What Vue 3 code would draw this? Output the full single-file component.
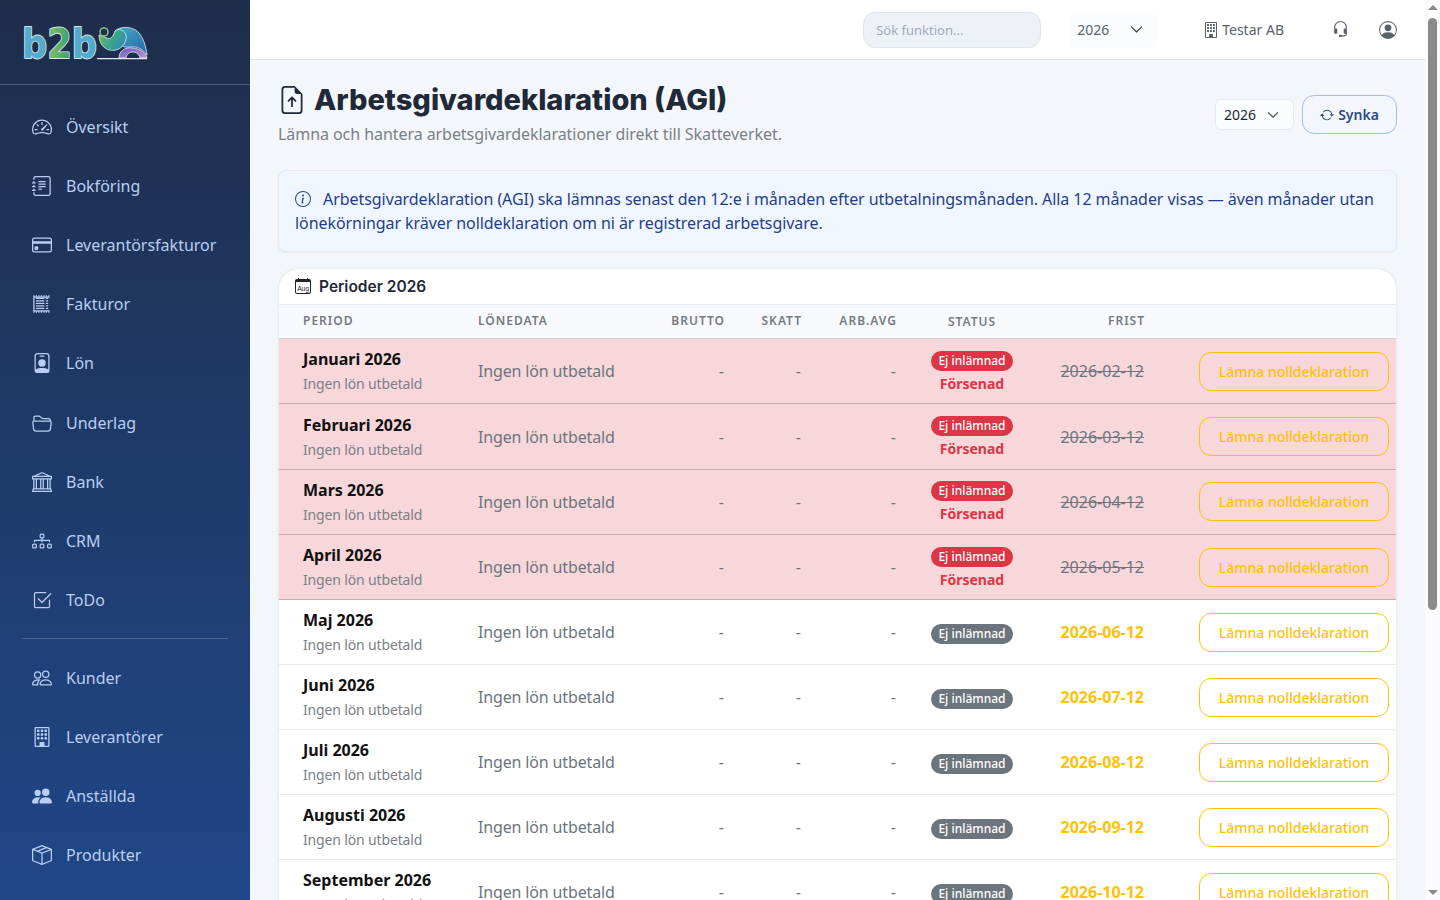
<template>
  <div class="layout">
    <aside class="sidebar">
      <div class="brand">
        <svg class="logo" viewBox="0 -6 130 52" width="130" height="52">
          <defs>
            <linearGradient id="letters" x1="0" y1="0" x2="1" y2="0">
              <stop offset="0" stop-color="#52acce" />
              <stop offset="0.34" stop-color="#52acce" />
              <stop offset="0.42" stop-color="#76ba5e" />
              <stop offset="0.62" stop-color="#3aa07a" />
              <stop offset="0.68" stop-color="#52acce" />
              <stop offset="1" stop-color="#52acce" />
            </linearGradient>
            <linearGradient id="trunk" x1="0" y1="0" x2="1" y2="0.5">
              <stop offset="0" stop-color="#7dbb5a" />
              <stop offset="0.6" stop-color="#3aa58c" />
              <stop offset="1" stop-color="#2f8fb0" />
            </linearGradient>
            <linearGradient id="dome" x1="0" y1="0" x2="1" y2="1">
              <stop offset="0" stop-color="#3fb0c8" />
              <stop offset="1" stop-color="#2d5fa6" />
            </linearGradient>
            <linearGradient id="legs" x1="0" y1="0" x2="1" y2="1">
              <stop offset="0" stop-color="#6a58c0" />
              <stop offset="1" stop-color="#c094d4" />
            </linearGradient>
          </defs>
          <text class="logo-text" x="2" y="35" textLength="75" lengthAdjust="spacingAndGlyphs" fill="url(#letters)">b2b</text>
          <path d="M77 35.6h50" stroke="#e3e8ec" stroke-width="1.4" />
          <path d="M99 35c0-8 7-11 14-10 8 1 13 5 14 10h-7c-1-4-4-6-7-6-4 0-6 2-7 6z" fill="url(#legs)" stroke="#e3e8ec" stroke-width="0.8" />
          <path d="M95 8c5-5 17-5 23 1 5 5 8 14 9 23-4-6-10-9-17-8-6 1-10-1-12-6z" fill="url(#dome)" stroke="#e3e8ec" stroke-width="0.8" />
          <path d="M79 12c0 11 8 17 17 15 8-2 11-10 10-15-2-5-7-7-11-4-2 6-5 9-8 7z" fill="url(#trunk)" stroke="#e3e8ec" stroke-width="0.8" />
          <circle cx="84" cy="9" r="4" fill="#1e2e4b" stroke="#7fc08a" stroke-width="1.6" />
        </svg>
      </div>
      <nav class="nav">
        <template v-for="item in navItems" :key="item.label">
          <div v-if="item.divider" class="nav-divider"></div>
          <a class="nav-item" href="#">
            <svg class="nav-icon" viewBox="0 0 16 16" width="20" height="20" fill="currentColor">
              <path v-for="d in item.icon" :key="d" :d="d" fill-rule="evenodd" />
            </svg>
            <span>{{ item.label }}</span>
          </a>
        </template>
      </nav>
    </aside>

    <div class="page">
      <header class="topbar">
        <input class="search" type="text" placeholder="Sök funktion..." />
        <div class="top-year">
          <span>2026</span>
          <svg viewBox="0 0 16 16" width="13" height="13" fill="#343a40" stroke="#343a40" stroke-width="0.6"><path :d="icons.chevron" /></svg>
        </div>
        <div class="company">
          <svg viewBox="0 0 16 16" width="16" height="16" fill="currentColor"><path v-for="d in icons.building" :key="d" :d="d" /></svg>
          <span>Testar AB</span>
        </div>
        <svg class="top-icon headset" viewBox="0 0 16 16" width="17" height="17" fill="currentColor"><path :d="icons.headset" /></svg>
        <svg class="top-icon" viewBox="0 0 16 16" width="18" height="18" fill="currentColor"><path v-for="d in icons.person" :key="d" :d="d" fill-rule="evenodd" /></svg>
      </header>

      <main class="content">
        <div class="page-head">
          <div>
            <h1>
              <svg viewBox="0 0 16 16" width="28" height="28" fill="currentColor"><path v-for="d in icons.fileUp" :key="d" :d="d" /></svg>
              Arbetsgivardeklaration (AGI)
            </h1>
            <p class="subtitle">Lämna och hantera arbetsgivardeklarationer direkt till Skatteverket.</p>
          </div>
          <div class="head-actions">
            <div class="year-select">
              <span>2026</span>
              <svg viewBox="0 0 16 16" width="12" height="12" fill="#343a40" stroke="#343a40" stroke-width="0.6"><path :d="icons.chevron" /></svg>
            </div>
            <button class="sync-btn">
              <svg viewBox="0 0 16 16" width="14" height="14" fill="currentColor"><path v-for="d in icons.sync" :key="d" :d="d" fill-rule="evenodd" /></svg>
              Synka
            </button>
          </div>
        </div>

        <div class="info-box">
          <svg viewBox="0 0 16 16" width="16" height="16" fill="currentColor"><path v-for="d in icons.info" :key="d" :d="d" /></svg>
          Arbetsgivardeklaration (AGI) ska lämnas senast den 12:e i månaden efter utbetalningsmånaden. Alla 12 månader visas — även månader utan lönekörningar kräver nolldeklaration om ni är registrerad arbetsgivare.
        </div>

        <section class="card">
          <div class="card-head">
            <svg viewBox="0 0 16 16" width="16" height="16" fill="currentColor">
              <path :d="icons.calendar" fill-rule="evenodd" />
              <text x="8" y="12.6" text-anchor="middle" font-size="6.6" font-family="Liberation Sans, sans-serif">Aug</text>
            </svg>
            <h2>Perioder 2026</h2>
          </div>
          <table class="agi-table">
            <colgroup>
              <col class="col-period" />
              <col class="col-pay" />
              <col class="col-gross" />
              <col class="col-tax" />
              <col class="col-fee" />
              <col class="col-status" />
              <col class="col-due" />
              <col />
            </colgroup>
            <thead>
              <tr>
                <th class="first">Period</th>
                <th>Lönedata</th>
                <th class="num">Brutto</th>
                <th class="num">Skatt</th>
                <th class="num">Arb.avg</th>
                <th class="center">Status</th>
                <th class="num">Frist</th>
                <th></th>
              </tr>
            </thead>
            <tbody>
              <tr v-for="row in rows" :key="row.name" :class="{ late: row.late }">
                <td class="first">
                  <div class="period-name">{{ row.name }}</div>
                  <div class="period-sub">Ingen lön utbetald</div>
                </td>
                <td class="muted pay">Ingen lön utbetald</td>
                <td class="num muted">-</td>
                <td class="num muted">-</td>
                <td class="num muted">-</td>
                <td class="center">
                  <span class="badge">Ej inlämnad</span>
                  <div v-if="row.late" class="late-text">Försenad</div>
                </td>
                <td class="num"><span class="due">{{ row.due }}</span></td>
                <td class="action"><button class="zero-btn">Lämna nolldeklaration</button></td>
              </tr>
            </tbody>
          </table>
        </section>
      </main>
    </div>

    <!-- the window's scrollbar as in the reference -->
    <div class="scrollbar" aria-hidden="true">
      <span class="arrow up"></span>
      <div class="scroll-track"><div class="scroll-thumb"></div></div>
      <span class="arrow down"></span>
    </div>
  </div>
</template>

<script setup>
// bootstrap-icons paths
const icons = {
  chevron: 'M1.646 4.646a.5.5 0 0 1 .708 0L8 10.293l5.646-5.647a.5.5 0 0 1 .708.708l-6 6a.5.5 0 0 1-.708 0l-6-6a.5.5 0 0 1 0-.708',
  headset: 'M8 1a5 5 0 0 0-5 5v1h1a1 1 0 0 1 1 1v3a1 1 0 0 1-1 1H3a1 1 0 0 1-1-1V6a6 6 0 1 1 12 0v6a2.5 2.5 0 0 1-2.5 2.5H9.366a1 1 0 0 1-.866.5h-1a1 1 0 1 1 0-2h1a1 1 0 0 1 .866.5H11.5A1.5 1.5 0 0 0 13 12h-1a1 1 0 0 1-1-1V8a1 1 0 0 1 1-1h1V6a5 5 0 0 0-5-5',
  person: [
    'M11 6a3 3 0 1 1-6 0 3 3 0 0 1 6 0',
    'M0 8a8 8 0 1 1 16 0A8 8 0 0 1 0 8m8-7a7 7 0 0 0-5.468 11.37C3.242 11.226 4.805 10 8 10s4.757 1.225 5.468 2.37A7 7 0 0 0 8 1',
  ],
  building: [
    'M4 2.5a.5.5 0 0 1 .5-.5h1a.5.5 0 0 1 .5.5v1a.5.5 0 0 1-.5.5h-1a.5.5 0 0 1-.5-.5zm3 0a.5.5 0 0 1 .5-.5h1a.5.5 0 0 1 .5.5v1a.5.5 0 0 1-.5.5h-1a.5.5 0 0 1-.5-.5zm3.5-.5a.5.5 0 0 0-.5.5v1a.5.5 0 0 0 .5.5h1a.5.5 0 0 0 .5-.5v-1a.5.5 0 0 0-.5-.5zM4 5.5a.5.5 0 0 1 .5-.5h1a.5.5 0 0 1 .5.5v1a.5.5 0 0 1-.5.5h-1a.5.5 0 0 1-.5-.5zM7.5 5a.5.5 0 0 0-.5.5v1a.5.5 0 0 0 .5.5h1a.5.5 0 0 0 .5-.5v-1a.5.5 0 0 0-.5-.5zm2.5.5a.5.5 0 0 1 .5-.5h1a.5.5 0 0 1 .5.5v1a.5.5 0 0 1-.5.5h-1a.5.5 0 0 1-.5-.5zM4.5 8a.5.5 0 0 0-.5.5v1a.5.5 0 0 0 .5.5h1a.5.5 0 0 0 .5-.5v-1a.5.5 0 0 0-.5-.5zm2.5.5a.5.5 0 0 1 .5-.5h1a.5.5 0 0 1 .5.5v1a.5.5 0 0 1-.5.5h-1a.5.5 0 0 1-.5-.5zm3.5-.5a.5.5 0 0 0-.5.5v1a.5.5 0 0 0 .5.5h1a.5.5 0 0 0 .5-.5v-1a.5.5 0 0 0-.5-.5z',
    'M2 1a1 1 0 0 1 1-1h10a1 1 0 0 1 1 1v14a1 1 0 0 1-1 1H3a1 1 0 0 1-1-1zm11 0H3v14h3v-2.5a.5.5 0 0 1 .5-.5h3a.5.5 0 0 1 .5.5V15h3z',
  ],
  fileUp: [
    'M8.5 11.5a.5.5 0 0 1-1 0V7.707L6.354 8.854a.5.5 0 1 1-.708-.708l2-2a.5.5 0 0 1 .708 0l2 2a.5.5 0 0 1-.708.708L8.5 7.707z',
    'M14 14V4.5L9.5 0H4a2 2 0 0 0-2 2v12a2 2 0 0 0 2 2h8a2 2 0 0 0 2-2M9.5 3A1.5 1.5 0 0 0 11 4.5h2V14a1 1 0 0 1-1 1H4a1 1 0 0 1-1-1V2a1 1 0 0 1 1-1h5.5z',
  ],
  sync: [
    'M11.534 7h3.932a.25.25 0 0 1 .192.41l-1.966 2.36a.25.25 0 0 1-.384 0l-1.966-2.36a.25.25 0 0 1 .192-.41m-11 2h3.932a.25.25 0 0 0 .192-.41L2.692 6.23a.25.25 0 0 0-.384 0L.342 8.59A.25.25 0 0 0 .534 9',
    'M8 3c-1.552 0-2.94.707-3.857 1.818a.5.5 0 1 1-.771-.636A6.002 6.002 0 0 1 13.917 7H12.9A5 5 0 0 0 8 3M3.1 9a5.002 5.002 0 0 0 8.757 2.182.5.5 0 1 1 .771.636A6.002 6.002 0 0 1 2.083 9z',
  ],
  info: [
    'M8 15A7 7 0 1 1 8 1a7 7 0 0 1 0 14m0 1A8 8 0 1 0 8 0a8 8 0 0 0 0 16',
    'm8.93 6.588-2.29.287-.082.38.45.083c.294.07.352.176.288.469l-.738 3.468c-.194.897.105 1.319.808 1.319.545 0 1.178-.252 1.465-.598l.088-.416c-.2.176-.492.246-.686.246-.275 0-.375-.193-.304-.533zM9 4.5a1 1 0 1 1-2 0 1 1 0 0 1 2 0',
  ],
  calendar: 'M3.5 0a.5.5 0 0 1 .5.5V1h8V.5a.5.5 0 0 1 1 0V1h1a2 2 0 0 1 2 2v11a2 2 0 0 1-2 2H2a2 2 0 0 1-2-2V3a2 2 0 0 1 2-2h1V.5a.5.5 0 0 1 .5-.5M1 4v10a1 1 0 0 0 1 1h12a1 1 0 0 0 1-1V4z',
}

const navItems = [
  { label: 'Översikt', icon: [
    'M8 4a.5.5 0 0 1 .5.5V6a.5.5 0 0 1-1 0V4.5A.5.5 0 0 1 8 4M3.732 5.732a.5.5 0 0 1 .707 0l.915.914a.5.5 0 1 1-.708.708l-.914-.915a.5.5 0 0 1 0-.707M2 10a.5.5 0 0 1 .5-.5h1.586a.5.5 0 0 1 0 1H2.5A.5.5 0 0 1 2 10m9.5 0a.5.5 0 0 1 .5-.5h1.5a.5.5 0 0 1 0 1H12a.5.5 0 0 1-.5-.5m.754-4.246a.39.39 0 0 0-.527-.02L7.547 9.31a.91.91 0 1 0 1.302 1.258l3.434-4.297a.39.39 0 0 0-.029-.518z',
    'M0 10a8 8 0 1 1 15.547 2.661c-.442 1.253-1.845 1.602-2.932 1.25C11.309 13.488 9.475 13 8 13c-1.474 0-3.31.488-4.615.911-1.087.352-2.49.003-2.932-1.25A8 8 0 0 1 0 10m8-7a7 7 0 0 0-6.603 9.329c.203.575.923.876 1.68.63C4.397 12.533 6.358 12 8 12s3.604.532 4.923.96c.757.245 1.477-.056 1.68-.631A7 7 0 0 0 8 3',
  ] },
  { label: 'Bokföring', icon: [
    'M5 10.5a.5.5 0 0 1 .5-.5h2a.5.5 0 0 1 0 1h-2a.5.5 0 0 1-.5-.5m0-2a.5.5 0 0 1 .5-.5h5a.5.5 0 0 1 0 1h-5a.5.5 0 0 1-.5-.5m0-2a.5.5 0 0 1 .5-.5h5a.5.5 0 0 1 0 1h-5a.5.5 0 0 1-.5-.5m0-2a.5.5 0 0 1 .5-.5h5a.5.5 0 0 1 0 1h-5a.5.5 0 0 1-.5-.5',
    'M3 0h10a2 2 0 0 1 2 2v12a2 2 0 0 1-2 2H3a2 2 0 0 1-2-2v-1h1v1a1 1 0 0 0 1 1h10a1 1 0 0 0 1-1V2a1 1 0 0 0-1-1H3a1 1 0 0 0-1 1v1H1V2a2 2 0 0 1 2-2',
    'M1 5v-.5a.5.5 0 0 1 1 0V5h.5a.5.5 0 0 1 0 1h-2a.5.5 0 0 1 0-1zm0 3v-.5a.5.5 0 0 1 1 0V8h.5a.5.5 0 0 1 0 1h-2a.5.5 0 0 1 0-1zm0 3v-.5a.5.5 0 0 1 1 0v.5h.5a.5.5 0 0 1 0 1h-2a.5.5 0 0 1 0-1z',
  ] },
  { label: 'Leverantörsfakturor', icon: [
    'M0 4a2 2 0 0 1 2-2h12a2 2 0 0 1 2 2v8a2 2 0 0 1-2 2H2a2 2 0 0 1-2-2zm2-1a1 1 0 0 0-1 1v1h14V4a1 1 0 0 0-1-1zm13 4H1v5a1 1 0 0 0 1 1h12a1 1 0 0 0 1-1z',
    'M2 10a1 1 0 0 1 1-1h1a1 1 0 0 1 1 1v1a1 1 0 0 1-1 1H3a1 1 0 0 1-1-1z',
  ] },
  { label: 'Fakturor', icon: [
    'M3 3.5a.5.5 0 0 1 .5-.5h6a.5.5 0 0 1 0 1h-6a.5.5 0 0 1-.5-.5m0 2a.5.5 0 0 1 .5-.5h6a.5.5 0 0 1 0 1h-6a.5.5 0 0 1-.5-.5m0 2a.5.5 0 0 1 .5-.5h6a.5.5 0 0 1 0 1h-6a.5.5 0 0 1-.5-.5m0 2a.5.5 0 0 1 .5-.5h6a.5.5 0 0 1 0 1h-6a.5.5 0 0 1-.5-.5m0 2a.5.5 0 0 1 .5-.5h6a.5.5 0 0 1 0 1h-6a.5.5 0 0 1-.5-.5M11.5 3a.5.5 0 0 0 0 1h1a.5.5 0 0 0 0-1zm0 2a.5.5 0 0 0 0 1h1a.5.5 0 0 0 0-1zm0 2a.5.5 0 0 0 0 1h1a.5.5 0 0 0 0-1zm0 2a.5.5 0 0 0 0 1h1a.5.5 0 0 0 0-1zm0 2a.5.5 0 0 0 0 1h1a.5.5 0 0 0 0-1z',
    'M1 1h1v1h1V1h1v1h1V1h1v1h1V1h1v1h1V1h1v1h1V1h1v1h1V1h1v14h-1v-1h-1v1h-1v-1h-1v1H9v-1H8v1H7v-1H6v1H5v-1H4v1H3v-1H2v1H1zm1 2v10h12V3z',
  ] },
  { label: 'Lön', icon: [
    'M6.5 2a.5.5 0 0 0 0 1h3a.5.5 0 0 0 0-1zM11 8a3 3 0 1 1-6 0 3 3 0 0 1 6 0',
    'M4.5 0A2.5 2.5 0 0 0 2 2.5V14a2 2 0 0 0 2 2h8a2 2 0 0 0 2-2V2.5A2.5 2.5 0 0 0 11.5 0zM3 2.5A1.5 1.5 0 0 1 4.5 1h7A1.5 1.5 0 0 1 13 2.5v10.795a4.2 4.2 0 0 0-.776-.492C11.392 12.387 10.063 12 8 12s-3.392.387-4.224.803a4.2 4.2 0 0 0-.776.492z',
  ] },
  { label: 'Underlag', icon: [
    'M1 3.5A1.5 1.5 0 0 1 2.5 2h2.764c.958 0 1.76.56 2.311 1.184C7.985 3.648 8.48 4 9 4h4.5A1.5 1.5 0 0 1 15 5.5v.64c.57.265.94.876.856 1.546l-.64 5.124A2.5 2.5 0 0 1 12.733 15H3.266a2.5 2.5 0 0 1-2.481-2.19l-.64-5.124A1.5 1.5 0 0 1 1 6.14zM2 6h12v-.5a.5.5 0 0 0-.5-.5H9c-.964 0-1.71-.629-2.174-1.154C6.374 3.334 5.82 3 5.264 3H2.5a.5.5 0 0 0-.5.5zm-.367 1a.5.5 0 0 0-.496.562l.64 5.124A1.5 1.5 0 0 0 3.266 14h9.468a1.5 1.5 0 0 0 1.489-1.314l.64-5.124A.5.5 0 0 0 14.367 7z',
  ] },
  { label: 'Bank', icon: [
    'm8 0 6.61 3h.89a.5.5 0 0 1 .5.5v2a.5.5 0 0 1-.5.5H15v7a.5.5 0 0 1 .485.38l.5 2a.498.498 0 0 1-.485.62H.5a.498.498 0 0 1-.485-.62l.5-2A.5.5 0 0 1 1 13V6H.5a.5.5 0 0 1-.5-.5v-2A.5.5 0 0 1 .5 3h.89zM3.777 3h8.447L8 1zM2 6v7h1V6zm2 0v7h2.5V6zm3.5 0v7h1V6zm2 0v7H12V6zM13 6v7h1V6zm2-1V4H1v1zm-.39 9H1.39l-.25 1h13.72z',
  ] },
  { label: 'CRM', icon: [
    'M6 3.5A1.5 1.5 0 0 1 7.5 2h1A1.5 1.5 0 0 1 10 3.5v1A1.5 1.5 0 0 1 8.5 6v1H14a.5.5 0 0 1 .5.5v1a.5.5 0 0 1-1 0V8h-5v.5a.5.5 0 0 1-1 0V8h-5v.5a.5.5 0 0 1-1 0v-1A.5.5 0 0 1 2 7h5.5V6A1.5 1.5 0 0 1 6 4.5zM8.5 5a.5.5 0 0 0 .5-.5v-1a.5.5 0 0 0-.5-.5h-1a.5.5 0 0 0-.5.5v1a.5.5 0 0 0 .5.5zM0 11.5A1.5 1.5 0 0 1 1.5 10h1A1.5 1.5 0 0 1 4 11.5v1A1.5 1.5 0 0 1 2.5 14h-1A1.5 1.5 0 0 1 0 12.5zm1.5-.5a.5.5 0 0 0-.5.5v1a.5.5 0 0 0 .5.5h1a.5.5 0 0 0 .5-.5v-1a.5.5 0 0 0-.5-.5zm4.5.5A1.5 1.5 0 0 1 7.5 10h1a1.5 1.5 0 0 1 1.5 1.5v1A1.5 1.5 0 0 1 8.5 14h-1A1.5 1.5 0 0 1 6 12.5zm1.5-.5a.5.5 0 0 0-.5.5v1a.5.5 0 0 0 .5.5h1a.5.5 0 0 0 .5-.5v-1a.5.5 0 0 0-.5-.5zm4.5.5a1.5 1.5 0 0 1 1.5-1.5h1a1.5 1.5 0 0 1 1.5 1.5v1a1.5 1.5 0 0 1-1.5 1.5h-1a1.5 1.5 0 0 1-1.5-1.5zm1.5-.5a.5.5 0 0 0-.5.5v1a.5.5 0 0 0 .5.5h1a.5.5 0 0 0 .5-.5v-1a.5.5 0 0 0-.5-.5z',
  ] },
  { label: 'ToDo', icon: [
    'M3 14.5A1.5 1.5 0 0 1 1.5 13V3A1.5 1.5 0 0 1 3 1.5h8a.5.5 0 0 1 0 1H3a.5.5 0 0 0-.5.5v10a.5.5 0 0 0 .5.5h10a.5.5 0 0 0 .5-.5V8a.5.5 0 0 1 1 0v5a1.5 1.5 0 0 1-1.5 1.5z',
    'm8.354 10.354 7-7a.5.5 0 0 0-.708-.708L8 9.293 5.354 6.646a.5.5 0 1 0-.708.708l3 3a.5.5 0 0 0 .708 0',
  ] },
  { label: 'Kunder', divider: true, icon: [
    'M15 14s1 0 1-1-1-4-5-4-5 3-5 4 1 1 1 1zm-7.978-1L7 12.996c.001-.264.167-1.03.76-1.72C8.312 10.629 9.282 10 11 10c1.717 0 2.687.63 3.24 1.276.593.69.758 1.457.76 1.72l-.008.002-.014.002zM11 7a2 2 0 1 0 0-4 2 2 0 0 0 0 4m3-2a3 3 0 1 1-6 0 3 3 0 0 1 6 0M6.936 9.28a6 6 0 0 0-1.23-.247A7 7 0 0 0 5 9c-4 0-5 3-5 4q0 1 1 1h4.216A2.24 2.24 0 0 1 5 13c0-1.01.377-2.042 1.09-2.904.243-.294.526-.569.846-.816M4.92 10A5.5 5.5 0 0 0 4 13H1c0-.26.164-1.03.76-1.724.545-.636 1.492-1.256 3.16-1.275ZM1.5 5.5a3 3 0 1 1 6 0 3 3 0 0 1-6 0m3-2a2 2 0 1 0 0 4 2 2 0 0 0 0-4',
  ] },
  { label: 'Leverantörer', icon: icons.building },
  { label: 'Anställda', icon: [
    'M7 14s-1 0-1-1 1-4 5-4 5 3 5 4-1 1-1 1zm4-6a3 3 0 1 0 0-6 3 3 0 0 0 0 6m-5.784 6A2.24 2.24 0 0 1 5 13c0-1.355.68-2.75 1.936-3.72A6.3 6.3 0 0 0 5 9c-4 0-5 3-5 4s1 1 1 1zM4.5 8a2.5 2.5 0 1 0 0-5 2.5 2.5 0 0 0 0 5',
  ] },
  { label: 'Produkter', icon: [
    'M8.186 1.113a.5.5 0 0 0-.372 0L1.846 3.5l2.404.961L10.404 2zm3.564 1.426L5.596 5 8 5.961 14.154 3.5zm3.25 1.7-6.5 2.6v7.922l6.5-2.6V4.24zM7.5 14.762V6.838L1 4.239v7.925zM7.443.184a1.5 1.5 0 0 1 1.114 0l7.129 2.852A.5.5 0 0 1 16 3.5v8.662a1 1 0 0 1-.629.928l-7.185 2.874a.5.5 0 0 1-.372 0L.63 13.09a1 1 0 0 1-.63-.928V3.5a.5.5 0 0 1 .314-.464z',
  ] },
]

const months = ['Januari', 'Februari', 'Mars', 'April', 'Maj', 'Juni', 'Juli', 'Augusti', 'September', 'Oktober', 'November', 'December']

const rows = months.map((m, i) => {
  const dueMonth = i === 11 ? '2027-01' : '2026-' + String(i + 2).padStart(2, '0')
  return { name: m + ' 2026', due: dueMonth + '-12', late: i < 4 }
})
</script>

<style>
html, body { margin: 0; background: #f3f6fb; }
</style>

<style scoped>
.layout {
  display: flex;
  align-items: flex-start;
  font-family: "Noto Sans", sans-serif;
  font-size: 16px;
  color: #212529;
}

/* sidebar */
.sidebar {
  position: sticky;
  top: 0;
  width: 250px;
  height: 100vh;
  flex-shrink: 0;
  overflow: hidden;
  background: linear-gradient(180deg, #1e2d4a, #204788);
}
.brand {
  height: 84px;
  box-sizing: content-box;
  border-bottom: 1px solid rgba(255, 255, 255, 0.2);
  padding-left: 20px;
  display: flex;
  align-items: center;
}
.logo { margin-top: 1px; }
.logo-text {
  font-family: "DejaVu Sans", sans-serif;
  font-weight: 700;
  font-size: 40px;
  stroke: #dfe6ea;
  stroke-width: 1.8px;
  stroke-linejoin: round;
  paint-order: stroke fill;
}
.nav { padding-top: 12.5px; }
.nav-item {
  height: 59.1px;
  display: flex;
  align-items: center;
  gap: 14px;
  padding-left: 32px;
  color: #b9cef2;
  text-decoration: none;
}
.nav-icon { flex-shrink: 0; }
.nav-divider {
  height: 1px;
  margin: 8.6px 22px 9.4px;
  background: rgba(255, 255, 255, 0.2);
}

/* top bar */
.page {
  flex: 1;
  min-width: 0;
  margin-right: 15px;
}
.topbar {
  height: 59px;
  background: #fff;
  border-bottom: 1px solid #dfe3ea;
  display: flex;
  align-items: center;
  padding-right: 28px;
  justify-content: flex-end;
  color: #5a626b;
}
.search {
  width: 178px;
  height: 36px;
  box-sizing: border-box;
  padding: 0 12px;
  background: #eef1f8;
  border: 1px solid #e1e5ed;
  border-radius: 12px;
  font: 13px "Noto Sans", sans-serif;
  outline: none;
}
.search::placeholder { color: #a3abbb; }
.top-year {
  width: 88px;
  height: 36px;
  box-sizing: border-box;
  margin-left: 28px;
  padding: 0 14px 0 8px;
  background: #fbfcfe;
  border-radius: 8px;
  display: flex;
  align-items: center;
  justify-content: space-between;
  font-size: 14px;
}
.company {
  display: flex;
  align-items: center;
  gap: 3px;
  margin-left: 46px;
  font-size: 14px;
}
.top-icon { margin-left: 30px; }
.headset { margin-left: 48px; }

/* page content */
.content { padding: 25px 28px 200px; }
.page-head {
  display: flex;
  justify-content: space-between;
  align-items: center;
}
h1 {
  margin: 0;
  display: flex;
  align-items: center;
  gap: 8px;
  font-family: Inter, sans-serif;
  font-size: 29px;
  line-height: 30px;
  font-weight: 800;
  color: #1f2937;
}
.subtitle {
  margin: 7px 0 0;
  color: #7a8088;
  line-height: 24px;
  letter-spacing: -0.06px;
}
.head-actions {
  display: flex;
  align-items: center;
  gap: 8px;
  padding-bottom: 2px;
}
.year-select {
  width: 79px;
  height: 31px;
  box-sizing: border-box;
  padding: 0 14px 0 8px;
  background: #fbfcfe;
  border: 1px solid #e6e9ef;
  border-radius: 6px;
  display: flex;
  align-items: center;
  justify-content: space-between;
  font-size: 14px;
}
.sync-btn {
  width: 95px;
  height: 39px;
  display: flex;
  align-items: center;
  justify-content: center;
  gap: 4px;
  background: transparent;
  border: 1px solid #a4bcf0;
  border-radius: 12px;
  color: #2a4a8c;
  font: 600 14px "Noto Sans", sans-serif;
}
.info-box {
  margin-top: 24px;
  padding: 16px;
  background: #f0f6ff;
  border: 1px solid #e5e9f0;
  border-radius: 8px;
  box-shadow: 0 1px 3px rgba(0, 0, 0, 0.05);
  color: #1f4088;
  line-height: 24px;
  letter-spacing: -0.07px;
}
.info-box svg {
  vertical-align: -2px;
  margin-right: 8px;
  color: #2a4a8c;
}
.card {
  margin: 17px 1px 0;
  background: #fff;
  border-radius: 20px;
  overflow: hidden;
  box-shadow: 0 0 3px rgba(40, 60, 100, 0.12);
}
.card-head {
  height: 34.7px;
  display: flex;
  align-items: center;
  gap: 8px;
  padding-left: 16px;
  border-bottom: 1px solid #e6e9f0;
}
h2 {
  margin: 0;
  font-family: Inter, sans-serif;
  font-size: 15.5px;
  font-weight: 600;
  color: #1f2937;
}

/* table */
.agi-table {
  width: 100%;
  table-layout: fixed;
  border-collapse: collapse;
}
.col-period { width: 183px; }
.col-pay { width: 178px; }
.col-gross { width: 100px; }
.col-tax { width: 77px; }
.col-fee { width: 95px; }
.col-status { width: 120px; }
.col-due { width: 128px; }
th {
  height: 34px;
  box-sizing: border-box;
  padding: 0 16px 1px;
  background: #f8f9fc;
  color: #747b84;
  font-size: 12px;
  font-weight: 600;
  letter-spacing: 1px;
  text-transform: uppercase;
  text-align: left;
  border-bottom: 1px solid #cfd3da;
}
th.num { padding-right: 15px; }
td {
  height: 65px;
  box-sizing: border-box;
  padding: 0 16px;
  border-bottom: 1px solid #e9ebf0;
}
tr.late td { height: 65.25px; }
.first { padding-left: 24px; padding-right: 0; }
.num { text-align: right; }
th.center, .center { text-align: center; padding: 0; }
.muted { color: #6c757d; }
.pay { letter-spacing: -0.15px; }
tr.late td {
  background: #f8d7da;
  border-bottom-color: #c9adb2;
}
.period-name {
  font-weight: 700;
  line-height: 24px;
  color: #111;
  margin-top: -2px;
}
.period-sub {
  margin-top: 4px;
  font-size: 14px;
  line-height: 18px;
  color: #7a8088;
  letter-spacing: -0.15px;
}
.badge {
  display: inline-block;
  padding: 0 7px;
  height: 20px;
  line-height: 20px;
  border-radius: 10px;
  background: #6c757d;
  color: #fff;
  font-size: 12px;
  font-weight: 500;
}
.late .badge { background: #dc3545; }
.late-text {
  margin-top: 2px;
  color: #dc3545;
  font-size: 14px;
  font-weight: 700;
  line-height: 22px;
}
.due {
  color: #ffc107;
  font-weight: 700;
}
.late .due {
  color: #6c757d;
  font-weight: 400;
  text-decoration: line-through;
}
.action {
  text-align: right;
  padding: 0 7px 0 0;
}
.zero-btn {
  width: 190px;
  height: 39px;
  background: transparent;
  border: 1px solid #ffc107;
  border-radius: 12px;
  color: #ffc107;
  font: 500 14px "Noto Sans", sans-serif;
}

/* window scrollbar */
.scrollbar {
  position: fixed;
  top: 0;
  right: 0;
  bottom: 0;
  width: 15px;
  background: #fbfbfd;
  display: flex;
  flex-direction: column;
  align-items: center;
}
.arrow {
  width: 0;
  height: 0;
  margin: 5px 0;
  border-left: 5px solid transparent;
  border-right: 5px solid transparent;
}
.arrow.up { border-bottom: 5px solid #8a8a8a; }
.arrow.down { border-top: 5px solid #8a8a8a; }
.scroll-track { flex: 1; padding-top: 3px; }
.scroll-thumb {
  width: 9px;
  height: 592px;
  background: #8a8a8a;
  border-radius: 5px;
}
</style>
